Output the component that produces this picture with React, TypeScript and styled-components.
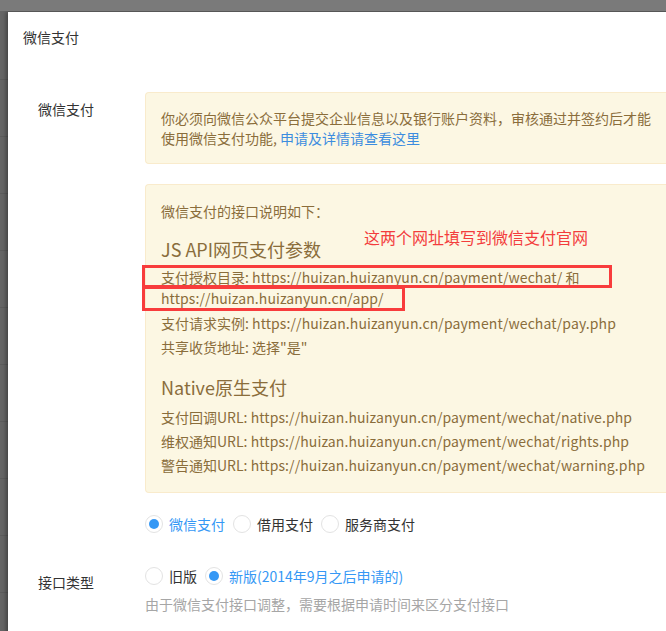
import React from "react";
import styled, { createGlobalStyle } from "styled-components";

const Global = createGlobalStyle`
  html, body { margin: 0; padding: 0; }
  body {
    width: 666px;
    height: 631px;
    overflow: hidden;
    background: #656565;
    font-family: "Noto Sans CJK SC", "Microsoft YaHei", sans-serif;
  }
`;

const Overlay = styled.div`
  width: 666px;
  height: 631px;
  overflow: hidden;
  background: repeating-linear-gradient(180deg, #656565 0, #656565 56px, #5c5c5c 56px, #5c5c5c 57px);
  background-position: 0 12px;
  border-top: 11px solid #7a7a7a;
  box-sizing: border-box;
  position: relative;
`;

const TopBar = styled.div`
  height: 11px;
  margin-top: -11px;
  background: linear-gradient(180deg, #8a8a8a 0, #747474 9px, #4a4a4a 10px, #4a4a4a 11px);
`;

const Dialog = styled.div`
  margin: 1px 0 0 8px;
  width: 720px;
  height: 640px;
  background: #fff;
  box-shadow: -2px 0 4px rgba(0, 0, 0, 0.35);
`;

const Header = styled.div`
  height: 50px;
  padding: 0 15px;
  display: flex;
  align-items: center;
  font-size: 14px;
  color: #333;
`;

const Body = styled.div`
  padding: 30px 0 0 30px;
`;

const FormRow = styled.div<{ $mt?: number }>`
  display: flex;
  margin-top: ${(p) => p.$mt ?? 0}px;
`;

const Label = styled.div<{ $pt?: number }>`
  width: 107px;
  flex: none;
  font-size: 14px;
  color: #333;
  padding-top: ${(p) => p.$pt ?? 0}px;
  line-height: 20px;
`;

const Field = styled.div`
  flex: 1;
  display: flex;
  flex-direction: column;
`;

const Alert = styled.div<{ $pt?: number; $pb?: number }>`
  position: relative;
  background: #fcf7e3;
  border: 1px solid #f9ebcc;
  border-right: none;
  border-radius: 4px 0 0 4px;
  padding: ${(p) => p.$pt ?? 15}px 0 ${(p) => p.$pb ?? 15}px 15px;
  color: #8a6d3b;
  font-size: 14px;
  line-height: 20px;
  margin-bottom: 20px;
`;

const Link = styled.a`
  color: #3c8ddf;
  text-decoration: none;
`;

const Para = styled.div<{ $mb?: number }>`
  margin-bottom: ${(p) => p.$mb ?? 0}px;
  line-height: 21px;
  white-space: nowrap;
`;

const Url = styled.span`
  letter-spacing: 0.1px;
`;

const Heading = styled.div<{ $mt?: number; $mb?: number }>`
  font-size: 18px;
  line-height: 22px;
  margin-top: ${(p) => p.$mt ?? 0}px;
  margin-bottom: ${(p) => p.$mb ?? 0}px;
`;

const Note = styled.div`
  position: absolute;
  left: 218px;
  top: 42px;
  color: #f33d3d;
  font-size: 16px;
  line-height: 20px;
`;

const Mark = styled.div`
  position: absolute;
  border: 3px solid #f83c3c;
  box-sizing: border-box;
`;

const RadioGroup = styled.div`
  display: flex;
  align-items: center;
  height: 22px;
`;

const RadioItem = styled.label<{ $on?: boolean }>`
  display: flex;
  align-items: center;
  font-size: 14px;
  color: ${(p) => (p.$on ? "#3598f5" : "#333")};
  margin-right: 8px;
`;

const Circle = styled.span<{ $on?: boolean }>`
  width: 18px;
  height: 18px;
  box-sizing: border-box;
  border-radius: 50%;
  border: 1px solid #e3e3e3;
  margin-right: 6px;
  display: flex;
  align-items: center;
  justify-content: center;
  &::after {
    content: "";
    width: 10px;
    height: 10px;
    border-radius: 50%;
    background: ${(p) => (p.$on ? "#3598f5" : "transparent")};
  }
`;

const Help = styled.div`
  font-size: 14px;
  color: #a6a6a6;
  margin-top: 7px;
  line-height: 20px;
`;

const Radio = ({ on, children }: { on?: boolean; children: React.ReactNode }) => (
  <RadioItem $on={on}>
    <Circle $on={on} />
    {children}
  </RadioItem>
);

export default function App() {
  return (
    <>
      <Global />
      <Overlay>
        <TopBar />
        <Dialog>
          <Header>微信支付</Header>
          <Body>
            <FormRow>
              <Label $pt={7}>微信支付</Label>
              <Field>
                <Alert>
                  你必须向微信公众平台提交企业信息以及银行账户资料，审核通过并签约后才能
                  <br />
                  使用微信支付功能, <Link>申请及详情请查看这里</Link>
                </Alert>
                <Alert $pt={16} $pb={16}>
                  <Para $mb={16}>微信支付的接口说明如下：</Para>
                  <Heading $mb={7}>JS API网页支付参数</Heading>
                  <Para>支付授权目录: <Url>https://huizan.huizanyun.cn/payment/wechat/</Url> 和</Para>
                  <Para $mb={4}><Url>https://huizan.huizanyun.cn/app/</Url></Para>
                  <Para $mb={3}>支付请求实例: <Url>https://huizan.huizanyun.cn/payment/wechat/pay.php</Url></Para>
                  <Para>共享收货地址: 选择"是"</Para>
                  <Heading $mt={18} $mb={9}>Native原生支付</Heading>
                  <Para $mb={3}>支付回调URL: <Url>https://huizan.huizanyun.cn/payment/wechat/native.php</Url></Para>
                  <Para $mb={3}>维权通知URL: <Url>https://huizan.huizanyun.cn/payment/wechat/rights.php</Url></Para>
                  <Para>警告通知URL: <Url>https://huizan.huizanyun.cn/payment/wechat/warning.php</Url></Para>
                  <Note>这两个网址填写到微信支付官网</Note>
                  <Mark style={{ left: -4, top: 80, width: 470, height: 23 }} />
                  <Mark style={{ left: -4, top: 101, width: 263, height: 25 }} />
                </Alert>
                <RadioGroup>
                  <Radio on>微信支付</Radio>
                  <Radio>借用支付</Radio>
                  <Radio>服务商支付</Radio>
                </RadioGroup>
              </Field>
            </FormRow>
            <FormRow $mt={30}>
              <Label $pt={7}>接口类型</Label>
              <Field>
                <RadioGroup>
                  <Radio>旧版</Radio>
                  <Radio on>新版(2014年9月之后申请的)</Radio>
                </RadioGroup>
                <Help>由于微信支付接口调整，需要根据申请时间来区分支付接口</Help>
              </Field>
            </FormRow>
          </Body>
        </Dialog>
      </Overlay>
    </>
  );
}
